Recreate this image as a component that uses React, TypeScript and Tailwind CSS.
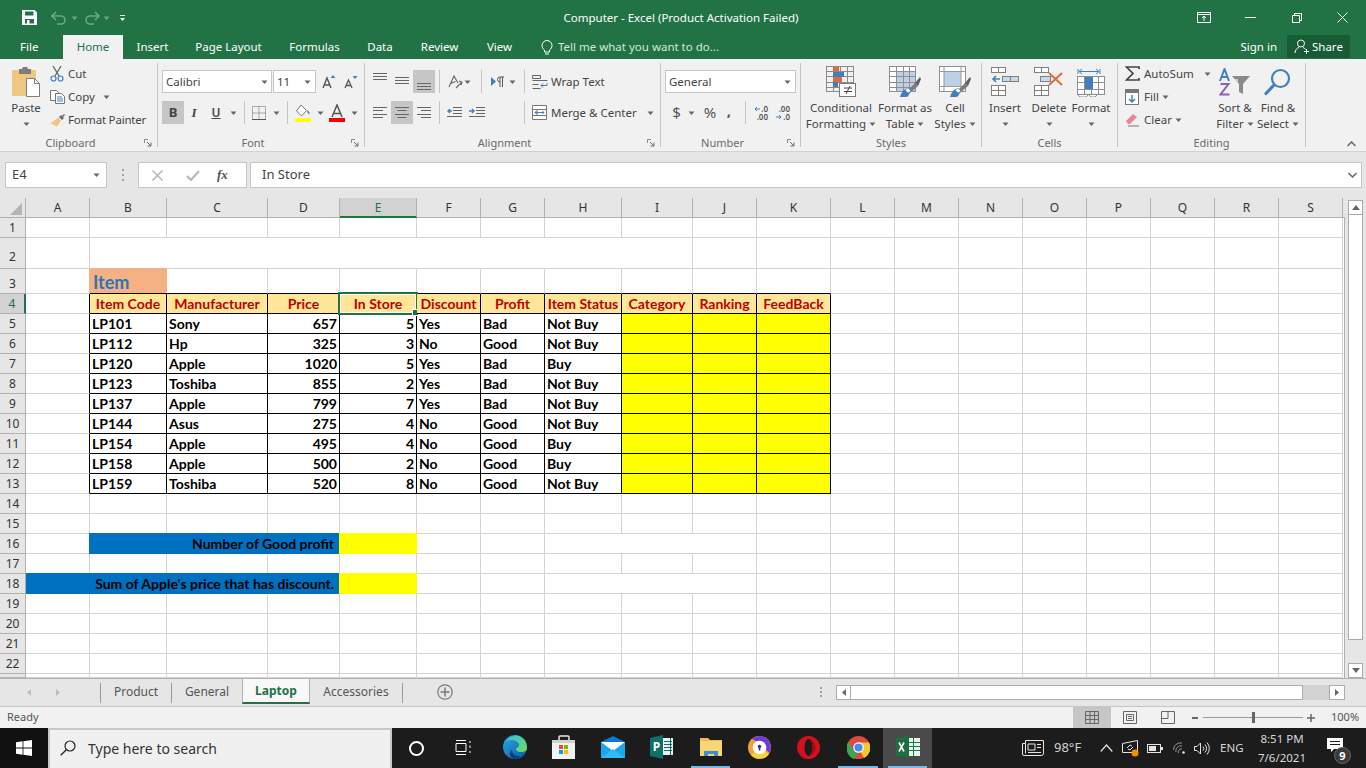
import React from "react";

const UI = "font-['Noto_Sans',sans-serif]";
const GRAY = "#666666";

const Caret = ({ c = "", fill = "#666" }: { c?: string; fill?: string }) => (
  <svg className={`shrink-0 ${c}`} width="7" height="4" viewBox="0 0 7 4"><path d="M.5.500h6L3.500 4z" fill={fill} /></svg>
);
const Sep = ({ c = "" }: { c?: string }) => <div className={`w-px h-[23px] bg-[#c6c6c6] shrink-0 ${c}`} />;

const Lines = ({ ys, ws, right }: { ys: number[]; ws: number[]; right?: boolean }) => (
  <svg width="14" height="23" viewBox="0 0 14 23" className="shrink-0">
    {ys.map((y, i) => (
      <rect key={i} x={right ? 14 - ws[i] : 0} y={y} width={ws[i]} height="1" fill={GRAY} />
    ))}
  </svg>
);
const CenterLines = ({ ys, ws }: { ys: number[]; ws: number[] }) => (
  <svg width="14" height="23" viewBox="0 0 14 23" className="shrink-0">
    {ys.map((y, i) => <rect key={i} x={(14 - ws[i]) / 2} y={y} width={ws[i]} height="1" fill={GRAY} />)}
  </svg>
);

/* ---------- Big ribbon icons ---------- */
const GridLines = ({ x, y, w, h, nx, ny, s = "#8a8a8a" }: { x: number; y: number; w: number; h: number; nx: number; ny: number; s?: string }) => (
  <g stroke={s} strokeWidth="1" fill="none">
    <rect x={x + 0.5} y={y + 0.5} width={w - 1} height={h - 1} />
    {Array.from({ length: nx - 1 }).map((_, i) => <path key={i} d={`M${x + Math.round(((i + 1) * w) / nx) + 0.5} ${y}v${h}`} />)}
    {Array.from({ length: ny - 1 }).map((_, i) => <path key={i} d={`M${x} ${y + Math.round(((i + 1) * h) / ny) + 0.5}h${w}`} />)}
  </g>
);
const Brush = () => (
  <g>
    <path d="M19 25l8-8 3 3-8 7z" fill="#7d7d7d" />
    <path d="M27 17l5-6 1 2-3 7z" fill="#5f5f5f" />
    <path d="M12 31c1-4 3-7 6-8l4 3c-1 3-2 5-4 5z" fill="#3f7fbf" />
    <path d="M17 24l3-2 3 3-3 2z" fill="#fff" stroke="#3f7fbf" strokeWidth=".6" />
  </g>
);
const CondIcon = () => (
  <svg width="32" height="32" viewBox="0 0 32 32" className="shrink-0">
    <GridLines x={1} y={0} w={28} h={26} nx={4} ny={5} />
    <rect x="8" y="1" width="6" height="5" fill="#dd6b3f" />
    <rect x="8" y="6" width="11" height="5" fill="#3f80bf" />
    <rect x="8" y="11" width="9" height="5" fill="#dd6b3f" />
    <rect x="8" y="16" width="5" height="5" fill="#3f80bf" />
    <rect x="14.5" y="17.5" width="16" height="13" fill="#fff" stroke="#7a7a7a" />
    <path d="M19 22h8M19 25.5h8M25 20l-4 8" stroke="#444" fill="none" />
  </svg>
);
const TableIcon = () => (
  <svg width="34" height="32" viewBox="0 0 34 32" className="shrink-0">
    <rect x="1" y="1" width="27" height="25" fill="#fff" />
    <rect x="8" y="6" width="20" height="20" fill="#bdd0e8" />
    <GridLines x={1} y={0} w={27} h={26} nx={4} ny={5} s="#8f8f8f" />
    <Brush />
  </svg>
);
const CellIcon = () => (
  <svg width="34" height="32" viewBox="0 0 34 32" className="shrink-0">
    <rect x="1" y="0" width="27" height="26" fill="#fff" />
    <GridLines x={1} y={0} w={27} h={26} nx={1} ny={1} s="#8f8f8f" />
    <rect x="6" y="6" width="17" height="14" fill="#bdd0e8" />
    <path d="M1 5.5h27M6 1v25M23 1v25M1 20.5h27" stroke="#9a9a9a" />
    <Brush />
  </svg>
);
const InsertIcon = () => (
  <svg width="28" height="30" viewBox="0 0 28 30" className="shrink-0">
    <g fill="#fff" stroke="#7f7f7f">
      <rect x=".5" y=".5" width="7" height="5" /><rect x="7.5" y=".5" width="7" height="5" />
      <rect x=".5" y="18.5" width="7" height="5" /><rect x="7.5" y="18.5" width="7" height="5" />
      <rect x=".5" y="23.5" width="7" height="5" /><rect x="7.5" y="23.5" width="7" height="5" />
    </g>
    <g fill="#c6d9ee" stroke="#7f7f7f"><rect x="11.5" y="9.5" width="8" height="5" /><rect x="19.5" y="9.5" width="8" height="5" /></g>
    <path d="M9 12H2M5 9l-3 3 3 3" stroke="#3f80bf" strokeWidth="1.6" fill="none" />
  </svg>
);
const DeleteIcon = () => (
  <svg width="30" height="30" viewBox="0 0 30 30" className="shrink-0">
    <g fill="#fff" stroke="#7f7f7f">
      <rect x=".5" y=".5" width="7" height="5" /><rect x="7.5" y=".5" width="7" height="5" />
      <rect x=".5" y="18.5" width="7" height="5" /><rect x="7.5" y="18.5" width="7" height="5" />
      <rect x=".5" y="23.5" width="7" height="5" /><rect x="7.5" y="23.5" width="7" height="5" />
    </g>
    <rect x="6.5" y="9.5" width="10" height="5" fill="#c6d9ee" stroke="#7f7f7f" />
    <path d="M15 6l13 12M28 6L15 18" stroke="#dd6b3f" strokeWidth="2" fill="none" />
  </svg>
);
const FormatIcon = () => (
  <svg width="28" height="30" viewBox="0 0 28 30" className="shrink-0">
    <path d="M1 2v5M23 2v5M2 4.500h20M5 2L2 4.500 5 7M19 2l3 2.500L19 7" stroke="#3f80bf" fill="none" />
    <rect x=".5" y="9.500" width="27" height="16" fill="#fff" />
    <GridLines x={0} y={9} w={28} h={19} nx={4} ny={3} s="#8f8f8f" />
    <rect x="8" y="10" width="8" height="12" fill="#3f80bf" />
    <path d="M1 28l2 2h6l2-2M12 28l2 2h4l2-2" fill="#fff" stroke="#8f8f8f" />
  </svg>
);
const SortIcon = () => (
  <svg width="32" height="28" viewBox="0 0 32 28" className="shrink-0">
    <path d="M1 13L5.500 1 10 13M2.500 9h6" stroke="#3f80bf" strokeWidth="2" fill="none" />
    <path d="M1.500 16h8L1.500 26.500h9" stroke="#8e5fb8" strokeWidth="2" fill="none" />
    <path d="M13 8h18l-7 8v10l-4-2v-8z" fill="#8a8a8a" /><path d="M19 15l-3-4h3z" fill="#cfcfcf" />
  </svg>
);
const FindIcon = () => (
  <svg width="28" height="28" viewBox="0 0 28 28" className="shrink-0">
    <circle cx="16.500" cy="10.500" r="8.500" stroke="#3f80bf" strokeWidth="2.200" fill="none" />
    <path d="M10 17L2 25.500" stroke="#3f80bf" strokeWidth="3.200" strokeLinecap="round" />
  </svg>
);

/* ---------- Ribbon scaffolding ---------- */
const Launcher = () => (
  <svg className="absolute right-[5px] top-[4px]" width="8" height="8" viewBox="0 0 8 8">
    <path d="M.5 4V.5H4" stroke="#8a8a8a" fill="none" /><path d="M3 3l4 4M7 3.500V7H3.500" stroke="#6a6a6a" fill="none" />
  </svg>
);
const Group = ({ w, label, launcher, children }: { w: string; label: string; launcher?: boolean; children: React.ReactNode }) => (
  <div className={`${w} h-[84px] shrink-0 flex flex-col border-r border-[#c6c6c6]`}>
    <div className="h-[72px] shrink-0 flex">{children}</div>
    <div className={`h-[16px] shrink-0 relative flex items-center justify-center text-[11px] text-[#6a6a6a] ${launcher ? "pr-[16px]" : ""}`}>
      {label}
      {launcher && <Launcher />}
    </div>
  </div>
);
const Row = ({ c = "", children }: { c?: string; children: React.ReactNode }) => (
  <div className={`flex items-center h-[23px] ${c}`}>{children}</div>
);
const Small = ({ icon, label, caret, iconW = "w-[18px]", c = "" }: { icon: React.ReactNode; label: string; caret?: string; iconW?: string; c?: string }) => (
  <div className={`flex items-center h-[23px] ${c}`}>
    <div className={`${iconW} flex justify-start shrink-0`}>{icon}</div>
    <span className="whitespace-nowrap">{label}</span>
    {caret && <Caret c={caret} />}
  </div>
);
const Big = ({ w, icon, l1, l2, caretLine }: { w: string; icon: React.ReactNode; l1: string; l2?: string; caretLine?: boolean }) => (
  <div className={`${w} shrink-0 flex flex-col items-center`}>
    <div className="h-[37px] flex items-center justify-center shrink-0">{icon}</div>
    <div className="leading-[16px] whitespace-nowrap text-center">{l1}</div>
    <div className="leading-[16px] whitespace-nowrap flex items-center justify-center h-[16px]">
      {l2}
      {caretLine && <Caret c={l2 ? "ml-[3px]" : ""} />}
    </div>
  </div>
);

const Ribbon = () => (
  <div className={`${UI} h-[93px] shrink-0 bg-[#f1f1f1] border-b border-[#d2d2d2] pt-[4px] flex items-start text-[11.500px] text-[#444]`}>
    <Group w="w-[158px]" label="Clipboard" launcher>
      <div className="w-[50px] shrink-0 flex flex-col items-center pl-[2px]">
        <div className="h-[37px] flex items-center">
          <svg width="30" height="30" viewBox="0 0 30 30">
            <rect x="1" y="3" width="24" height="26" fill="#eec882" />
            <path d="M8 2h3l1-2h4l1 2h3v5H8z" fill="#7d7d7d" />
            <path d="M15.500 11.500h8l5 5v13h-13z" fill="#fff" stroke="#7d7d7d" />
            <path d="M23.500 11.500v5h5" fill="none" stroke="#7d7d7d" />
          </svg>
        </div>
        <div className="leading-[16px]">Paste</div>
        <div className="h-[16px] flex items-center"><Caret /></div>
      </div>
      <div className="flex flex-col -mt-px">
        <Small label="Cut" icon={
          <svg width="14" height="16" viewBox="0 0 14 16">
            <path d="M3 0l6 10M11 0L5 10" stroke="#666" strokeWidth="1.300" fill="none" />
            <circle cx="3.500" cy="12.500" r="2.500" stroke="#3f80bf" strokeWidth="1.200" fill="none" />
            <circle cx="10.500" cy="12.500" r="2.500" stroke="#3f80bf" strokeWidth="1.200" fill="none" />
          </svg>} />
        <Small label="Copy" caret="ml-[8px]" icon={
          <svg width="15" height="14" viewBox="0 0 15 14">
            <path d="M.5.500h6l2 2v8H.5z" fill="#fff" stroke="#777" />
            <path d="M5.500 3.500h6l3 3v7h-9z" fill="#fff" stroke="#777" />
            <path d="M7 7h5M7 9h6M7 11h6" stroke="#3f80bf" />
          </svg>} />
        <Small label="Format Painter" c="tracking-[-0.2px]" icon={
          <svg width="16" height="14" viewBox="0 0 16 14">
            <path d="M9 4l2-2 1 1 2-2 1 1-2 2 1 1-2 2z" fill="#6a6a6a" />
            <path d="M8 4.500l3 3-4 6-7-3.500 2-.500z" fill="#eec882" />
          </svg>} />
      </div>
    </Group>

    <Group w="w-[207px]" label="Font" launcher>
      <div className="pt-[7px] pl-[4px] flex flex-col gap-[8px]">
        <Row>
          <div className="w-[110px] h-[23px] bg-white border border-[#c6c6c6] flex items-center justify-between pl-[3px] pr-[3px]">
            <span>Calibri</span><Caret />
          </div>
          <div className="w-[43px] ml-px h-[23px] bg-white border border-[#c6c6c6] flex items-center justify-between pl-[3px] pr-[4px]">
            <span>11</span><Caret />
          </div>
          <svg className="ml-[6px]" width="14" height="14" viewBox="0 0 14 14">
            <path d="M1 13L5 3l4 10M2.500 10h5" stroke="#555" strokeWidth="1.400" fill="none" /><path d="M8.500 3L11 0l2.500 3z" fill="#3f80bf" />
          </svg>
          <svg className="ml-[8px]" width="14" height="14" viewBox="0 0 14 14">
            <path d="M1 13l3.500-8L8 13M2 10.500h5" stroke="#555" strokeWidth="1.300" fill="none" /><path d="M8.500 1L11 4l2.500-3z" fill="#3f80bf" />
          </svg>
        </Row>
        <Row>
          <div className="w-[22px] h-[23px] bg-[#c6c6c6] flex items-center justify-center font-bold text-[13px] text-[#444]">B</div>
          <div className="w-[20px] flex justify-center italic font-semibold text-[13px] font-['Liberation_Serif',serif]">I</div>
          <div className="w-[24px] flex justify-center font-semibold text-[12px] underline">U</div>
          <Caret c="ml-[2px]" />
          <Sep c="ml-[7px]" />
          <svg className="ml-[7px]" width="14" height="14" viewBox="0 0 14 14">
            <path d="M.5.500h13v13H.5zM7 .5v13M.5 7h13" stroke="#666" strokeDasharray="1 1" fill="none" /><path d="M0 13.500h14" stroke="#555" />
          </svg>
          <Caret c="ml-[7px]" />
          <Sep c="ml-[7px]" />
          <svg className="ml-[7px]" width="16" height="18" viewBox="0 0 16 18">
            <path d="M6 1l5.500 5.500L6.500 12 1.500 7z" fill="#fff" stroke="#777" /><path d="M12 6c2 1 3 3 2.500 4.500C13 10 12 8 12 6z" fill="#3f80bf" />
            <rect y="14" width="16" height="4" fill="#ffff00" />
          </svg>
          <Caret c="ml-[6px]" />
          <svg className="ml-[5px]" width="16" height="18" viewBox="0 0 16 18">
            <path d="M3 13L8 1l5 12M4.500 9.500h7" stroke="#555" strokeWidth="1.500" fill="none" /><rect y="14" width="16" height="4" fill="#ff0000" />
          </svg>
          <Caret c="ml-[6px]" />
        </Row>
      </div>
    </Group>

    <Group w="w-[296px]" label="Alignment" launcher>
      <div className="pt-[7px] pl-[8px] flex flex-col gap-[8px]">
        <Row>
          <Lines ys={[3, 6, 9]} ws={[14, 14, 14]} />
          <div className="ml-[8px]"><Lines ys={[7, 10, 13]} ws={[14, 14, 14]} /></div>
          <div className="ml-[4px] w-[22px] h-[23px] bg-[#c6c6c6] flex justify-center"><Lines ys={[13, 16, 19]} ws={[14, 14, 14]} /></div>
          <Sep c="ml-[4px]" />
          <svg className="ml-[7px]" width="16" height="16" viewBox="0 0 16 16">
            <path d="M2 13L7 2l4 7M3.500 9.500l5-2M9 14l6-6M12 7l3 1-1 3" stroke="#666" strokeWidth="1.100" fill="none" />
          </svg>
          <Caret c="ml-[1px]" />
          <Sep c="ml-[10px]" />
          <svg className="ml-[9px]" width="14" height="12" viewBox="0 0 14 12">
            <path d="M0 1l5 4.500L0 10z" fill="#3f80bf" /><path d="M9 11V1h4M11.500 1v10M9 1a2.500 2.500 0 0 0 0 5" stroke="#555" fill="none" />
          </svg>
          <Caret c="ml-[4px]" />
          <Sep c="ml-[8px]" />
          <svg className="ml-[7px]" width="16" height="16" viewBox="0 0 16 16">
            <path d="M.5 1.500h8v3h-8zM.5 6.500h15M.5 10.500h6M.5 14.500h8" stroke="#666" fill="none" /><path d="M15 9v2.500H9M11 9.500l-2 2 2 2" stroke="#3f80bf" fill="none" />
          </svg>
          <span className="ml-[3px] whitespace-nowrap">Wrap Text</span>
        </Row>
        <Row>
          <Lines ys={[6, 9, 13, 16]} ws={[14, 10, 14, 10]} />
          <div className="ml-[4px] w-[22px] h-[23px] bg-[#c6c6c6] flex justify-center"><CenterLines ys={[6, 9, 13, 16]} ws={[14, 9, 14, 9]} /></div>
          <div className="ml-[4px]"><Lines right ys={[6, 9, 13, 16]} ws={[14, 10, 14, 10]} /></div>
          <Sep c="ml-[8px]" />
          <svg className="ml-[7px]" width="15" height="12" viewBox="0 0 15 12">
            <path d="M6 .5h9M6 3.500h9M6 6.500h9M0 9.500h15" stroke="#666" fill="none" /><path d="M5 4H1M3 2L1 4l2 2" stroke="#3f80bf" strokeWidth="1.400" fill="none" />
          </svg>
          <svg className="ml-[7px]" width="16" height="12" viewBox="0 0 16 12">
            <path d="M7 .5h9M7 3.500h9M7 6.500h9M0 9.500h16" stroke="#666" fill="none" /><path d="M0 4h4M3 2l2 2-2 2" stroke="#3f80bf" strokeWidth="1.400" fill="none" />
          </svg>
          <Sep c="ml-[39px]" />
          <svg className="ml-[7px]" width="15" height="15" viewBox="0 0 15 15">
            <path d="M.5.500h14v14H.5zM.5 4.500h14M.5 10.500h14M5 4.500v6" stroke="#777" fill="#fff" /><path d="M3 7.500h9M4.500 6l-1.500 1.500L4.500 9M10.500 6L12 7.500 10.500 9" stroke="#3f80bf" fill="none" />
          </svg>
          <span className="ml-[4px] whitespace-nowrap">Merge &amp; Center</span>
          <Caret c="ml-[10px]" />
        </Row>
      </div>
    </Group>

    <Group w="w-[140px]" label="Number" launcher>
      <div className="pt-[7px] pl-[4px] flex flex-col gap-[8px]">
        <Row>
          <div className="w-[131px] h-[23px] bg-white border border-[#c6c6c6] flex items-center justify-between pl-[3px] pr-[4px]">
            <span>General</span><Caret />
          </div>
        </Row>
        <Row>
          <span className="ml-[7px] w-[9px] text-[15px] text-[#555] flex justify-center">$</span>
          <Caret c="ml-[7px]" />
          <span className="ml-[8px] w-[14px] text-[15px] text-[#555] flex justify-center">%</span>
          <span className="ml-[9px] w-[6px] text-[15px] font-bold text-[#555] flex justify-center -mt-[4px]">,</span>
          <Sep c="ml-[13px]" />
          <div className="ml-[7px] w-[15px] text-[8px] leading-[8px] font-semibold text-[#555] text-right">
            <div className="flex items-center justify-end"><svg width="6" height="6" viewBox="0 0 6 6" className="mr-[1px]"><path d="M6 3H1M3 1L1 3l2 2" stroke="#3f80bf" fill="none" /></svg>.0</div>
            <div>.00</div>
          </div>
          <div className="ml-[7px] w-[15px] text-[8px] leading-[8px] font-semibold text-[#555] text-right">
            <div>.00</div>
            <div className="flex items-center justify-end"><svg width="6" height="6" viewBox="0 0 6 6" className="mr-[1px]"><path d="M0 3h5M3 1l2 2-2 2" stroke="#3f80bf" fill="none" /></svg>.0</div>
          </div>
        </Row>
      </div>
    </Group>

    <Group w="w-[181px]" label="Styles">
      <Big w="w-[80px]" icon={<CondIcon />} l1="Conditional" l2="Formatting" caretLine />
      <Big w="w-[48px]" icon={<TableIcon />} l1="Format as" l2="Table" caretLine />
      <Big w="w-[52px]" icon={<CellIcon />} l1="Cell" l2="Styles" caretLine />
    </Group>

    <Group w="w-[136px]" label="Cells">
      <Big w="w-[46px]" icon={<InsertIcon />} l1="Insert" caretLine />
      <Big w="w-[42px]" icon={<DeleteIcon />} l1="Delete" caretLine />
      <Big w="w-[42px]" icon={<FormatIcon />} l1="Format" caretLine />
    </Group>

    <Group w="w-[188px]" label="Editing">
      <div className="w-[95px] shrink-0 flex flex-col pl-[7px] -mt-px">
        <Small iconW="w-[19px]" label="AutoSum" caret="ml-[10px]" icon={
          <svg width="15" height="15" viewBox="0 0 15 15"><path d="M14 3V1H1.500L8 7.500 1.500 14H14v-2" stroke="#444" strokeWidth="1.700" fill="none" /></svg>} />
        <Small iconW="w-[19px]" label="Fill" caret="ml-[3px]" icon={
          <svg width="14" height="16" viewBox="0 0 14 16"><rect x=".5" y=".5" width="13" height="15" fill="#fff" stroke="#777" /><rect width="14" height="4" fill="#777" /><path d="M7 6v7M4 10l3 3 3-3" stroke="#3f80bf" strokeWidth="1.500" fill="none" /></svg>} />
        <Small iconW="w-[19px]" label="Clear" caret="ml-[3px]" icon={
          <svg width="15" height="14" viewBox="0 0 15 14"><path d="M1 8l7-7 4 3-7 7H3z" fill="#e98796" /><path d="M3 13h11" stroke="#777" /></svg>} />
      </div>
      <Big w="w-[44px]" icon={<SortIcon />} l1="Sort &" l2="Filter" caretLine />
      <Big w="w-[42px]" icon={<FindIcon />} l1="Find &" l2="Select" caretLine />
    </Group>

    <svg className="ml-auto self-end mb-[4px] mr-[10px]" width="9" height="6" viewBox="0 0 9 6"><path d="M.5 5l4-4 4 4" stroke="#666" strokeWidth="1.500" fill="none" /></svg>
  </div>
);

/* ---------- Title + tabs ---------- */
const TitleBar = () => (
  <div className={`${UI} h-[35px] shrink-0 bg-[#217346] flex items-center text-white`}>
    <svg className="ml-[22px]" width="15" height="15" viewBox="0 0 15 15">
      <path d="M0 0h12.500L15 2.500V15H0z" fill="#fff" />
      <rect x="3" y="1.500" width="8.500" height="4" fill="#217346" />
      <rect x="3" y="9" width="9" height="4.500" fill="#217346" /><rect x="5" y="10" width="2.500" height="5" fill="#fff" />
    </svg>
    <svg className="ml-[14px]" width="16" height="14" viewBox="0 0 16 14"><path d="M5 1L1 5l4 4M1 5h9a4 4 0 0 1 0 8H6" stroke="#6ba688" strokeWidth="1.600" fill="none" /></svg>
    <Caret c="ml-[4px]" fill="#6ba688" />
    <svg className="ml-[6px]" width="16" height="14" viewBox="0 0 16 14"><path d="M11 1l4 4-4 4M15 5H6a4 4 0 0 0 0 8h4" stroke="#6ba688" strokeWidth="1.600" fill="none" /></svg>
    <Caret c="ml-[3px]" fill="#6ba688" />
    <svg className="ml-[9px] mt-[2px]" width="7" height="7" viewBox="0 0 7 7"><path d="M1 .5h5" stroke="#fff" /><path d="M1 3h5L3.500 6z" fill="#fff" /></svg>
    <div className="flex-1 text-center text-[11.500px] ml-[39px]">Computer - Excel (Product Activation Failed)</div>
    <svg width="14" height="11" viewBox="0 0 14 11" className="mr-[34px]"><path d="M.5.500h13v10H.5zM1 2.500h12" stroke="#fff" fill="none" /><path d="M7 9V4.500M5 6l2-2 2 2" stroke="#fff" fill="none" /></svg>
    <div className="w-[11px] h-px bg-white mr-[36px]" />
    <svg width="10" height="10" viewBox="0 0 10 10" className="mr-[35px]"><path d="M.5 2.500h7v7h-7zM2.500 2.500v-2h7v7h-2" stroke="#fff" fill="none" /></svg>
    <svg width="11" height="11" viewBox="0 0 11 11" className="mr-[18px]"><path d="M.5.500l10 10M10.500.500l-10 10" stroke="#fff" fill="none" /></svg>
  </div>
);

const tabs: [string, string][] = [
  ["Insert", "w-[59px]"], ["Page Layout", "w-[93px]"], ["Formulas", "w-[79px]"], ["Data", "w-[52px]"], ["Review", "w-[67px]"], ["View", "w-[53px]"],
];
const TabsBar = () => (
  <div className={`${UI} h-[24px] shrink-0 bg-[#217346] flex items-stretch text-[11.500px] text-white`}>
    <div className="w-[63px] pl-[20px] leading-[24px]">File</div>
    <div className="w-[60px] bg-[#f1f1f1] text-[#217346] text-center leading-[24px]">Home</div>
    {tabs.map(([t, w]) => <div key={t} className={`${w} text-center leading-[24px]`}>{t}</div>)}
    <svg className="ml-[15px] self-center" width="12" height="15" viewBox="0 0 12 15"><path d="M3.500 10C2 9 1 7.500 1 5.500a5 5 0 0 1 10 0c0 2-1 3.500-2.500 4.500v2h-5zM4 14h4" stroke="#fff" fill="none" /></svg>
    <div className="ml-[5px] leading-[24px] text-[#d6e6dd] whitespace-nowrap">Tell me what you want to do...</div>
    <div className="ml-auto leading-[24px]">Sign in</div>
    <div className="ml-[10px] mr-[16px] w-[63px] h-[23px] bg-[#185c37] flex items-center pl-[7px]">
      <svg width="16" height="15" viewBox="0 0 16 15"><circle cx="7" cy="4.500" r="3.500" stroke="#fff" fill="none" /><path d="M1 14c0-3 2-5 4-5.500M9 8.500c1 .3 2 1 2.500 2M12.500 10v5M10 12.500h5" stroke="#fff" fill="none" /></svg>
      <span className="ml-[2px]">Share</span>
    </div>
  </div>
);

const FormulaBar = () => (
  <div className={`${UI} h-[46px] shrink-0 bg-[#e6e6e6] flex pt-[10px] pl-[5px] text-[#444] text-[13px]`}>
    <div className="w-[102px] h-[26px] bg-white border border-[#c6c6c6] flex items-center justify-between pl-[6px] pr-[6px]">
      <span>E4</span><Caret />
    </div>
    <div className="w-[31px] h-[26px] flex items-center justify-center">
      <div className="flex flex-col gap-[3px]">
        <div className="w-[2px] h-[2px] bg-[#a0a0a0]" /><div className="w-[2px] h-[2px] bg-[#a0a0a0]" /><div className="w-[2px] h-[2px] bg-[#a0a0a0]" />
      </div>
    </div>
    <div className="w-[109px] h-[26px] bg-white border border-[#c6c6c6] flex items-center pl-[13px]">
      <svg width="11" height="11" viewBox="0 0 11 11"><path d="M.5.500l10 10M10.500.500l-10 10" stroke="#b5b5b5" strokeWidth="1.500" fill="none" /></svg>
      <svg className="ml-[23px]" width="14" height="11" viewBox="0 0 14 11"><path d="M1 6l4 4 8-9" stroke="#b5b5b5" strokeWidth="2" fill="none" /></svg>
      <span className="ml-[17px] italic font-bold text-[13px] font-['Liberation_Serif',serif] text-[#555]">fx</span>
    </div>
    <div className="ml-[3px] w-[1112px] h-[26px] bg-white border border-[#c6c6c6] flex items-center pl-[11px] pr-[4px] justify-between">
      <span>In Store</span>
      <svg width="9" height="6" viewBox="0 0 9 6"><path d="M.5 1l4 4 4-4" stroke="#666" strokeWidth="1.500" fill="none" /></svg>
    </div>
  </div>
);

/* ---------- Sheet ---------- */
const cols = ["A", "B", "C", "D", "E", "F", "G", "H", "I", "J", "K", "L", "M", "N", "O", "P", "Q", "R", "S"];
const G = "border-r border-b border-[#d4d4d4] bg-white";
const K = "border-r border-b border-black";
const FONT = "font-['Lato',sans-serif] font-bold text-[14px] whitespace-nowrap";
const CELL = `${FONT} text-black overflow-hidden`;
const heads = ["Item Code", "Manufacturer", "Price", "In Store", "Discount", "Profit", "Item Status", "Category", "Ranking", "FeedBack"];
const data: (string | number)[][] = [
  ["LP101", "Sony", 657, 5, "Yes", "Bad", "Not Buy"],
  ["LP112", "Hp", 325, 3, "No", "Good", "Not Buy"],
  ["LP120", "Apple", 1020, 5, "Yes", "Bad", "Buy"],
  ["LP123", "Toshiba", 855, 2, "Yes", "Bad", "Not Buy"],
  ["LP137", "Apple", 799, 7, "Yes", "Bad", "Not Buy"],
  ["LP144", "Asus", 275, 4, "No", "Good", "Not Buy"],
  ["LP154", "Apple", 495, 4, "No", "Good", "Buy"],
  ["LP158", "Apple", 500, 2, "No", "Good", "Buy"],
  ["LP159", "Toshiba", 520, 8, "No", "Good", "Not Buy"],
];

const RowHead = ({ n }: { n: number }) => (
  <div className={`${UI} border-r border-b border-[#b1b1b1] ${n === 4 ? "bg-[#d2d2d2] text-[#217346] border-r-2 border-r-[#217346]" : "bg-[#e6e6e6] text-[#333]"} ${n === 2 ? "pb-[2px]" : ""} text-[12px] flex items-end justify-center leading-[18px]`}>
    {n === 23 ? "" : n}
  </div>
);
const Tail = () => <div className="bg-white border-r border-[#b1b1b1]" />;
const blanks = (idx: number[], r: string) => idx.map((i) => <div key={`${r}-${i}`} className={G} />);
const range = (a: number, b: number) => Array.from({ length: b - a + 1 }, (_, i) => a + i);

const SheetRow = ({ n }: { n: number }) => {
  let body: React.ReactNode;
  if (n === 2) {
    body = <>{blanks([0], "a")}<div className={`${G} col-span-8`} />{blanks(range(9, 18), "b")}</>;
  } else if (n === 3) {
    body = (
      <>
        <div className="border-r border-b border-r-[#f4b183] border-b-[#d4d4d4] bg-white" />
        <div className="relative -mt-px bg-[#f4b183] border-b border-black pl-[3px] font-['Lato',sans-serif] font-bold text-[18px] leading-[28px] text-[#2e75b6]">Item</div>
        {range(2, 10).map((i) => <div key={i} className="border-r border-b border-r-[#d4d4d4] border-b-black bg-white" />)}
        {blanks(range(11, 18), "c")}
      </>
    );
  } else if (n === 4) {
    body = (
      <>
        <div className="border-r border-b border-r-black border-b-[#d4d4d4] bg-white" />
        {heads.map((h) => (
          <div key={h} className={`${K} relative bg-[#ffe699] ${FONT} text-center text-[#c00000] leading-[20px]`}>
            {h}
            {h === "In Store" && (
              <div className="absolute -left-[2px] -top-[2px] w-[80px] h-[23px] border-2 border-[#217346] shadow-[inset_0_0_0_1px_#ffffff]">
                <div className="absolute -right-[3px] -bottom-[3px] w-[7px] h-[7px] bg-[#217346] border border-white" />
              </div>
            )}
          </div>
        ))}
        {blanks(range(11, 18), "d")}
      </>
    );
  } else if (n >= 5 && n <= 13) {
    const d = data[n - 5];
    body = (
      <>
        <div className="border-r border-b border-r-black border-b-[#d4d4d4] bg-white" />
        {d.map((v, i) => (
          <div key={i} className={`${K} ${CELL} bg-white leading-[20px] ${typeof v === "number" ? "text-right pr-[2px]" : "pl-[2px]"}`}>{v}</div>
        ))}
        <div className={`${K} bg-[#ffff00]`} /><div className={`${K} bg-[#ffff00]`} /><div className={`${K} bg-[#ffff00]`} />
        {blanks(range(11, 18), "e")}
      </>
    );
  } else if (n === 16) {
    body = (
      <>
        {blanks([0], "f")}
        <div className={`relative -mt-px -ml-px col-span-3 bg-[#0070c0] text-right pr-[6px] ${CELL} leading-[22px]`}>Number of Good profit</div>
        <div className="relative -mt-px -ml-px bg-[#ffff00]" />
        {blanks([5, 6], "g")}<div className={`${G} col-span-3`} />{blanks(range(10, 18), "h")}
      </>
    );
  } else if (n === 18) {
    body = (
      <>
        <div className={`relative -mt-px col-span-4 bg-[#0070c0] text-right pr-[6px] ${CELL} leading-[22px]`}>Sum of Apple's price that has discount.</div>
        <div className="relative -mt-px -ml-px bg-[#ffff00]" />
        {blanks([5, 6], "i")}<div className={`${G} col-span-3`} />{blanks(range(10, 18), "j")}
      </>
    );
  } else {
    body = blanks(range(0, 18), "k");
  }
  return <><RowHead n={n} />{body}<Tail /></>;
};

const Scrollbar = () => (
  <div className="w-[21px] shrink-0 bg-[#e6e6e6] pl-[3px] pt-[2px] flex flex-col">
    <div className="w-[15px] h-[15px] bg-white border border-[#ababab] flex items-center justify-center">
      <svg width="8" height="5" viewBox="0 0 8 5"><path d="M0 5l4-5 4 5z" fill="#666" /></svg>
    </div>
    <div className="w-[15px] h-[425px] bg-white border-x border-b border-[#ababab]" />
    <div className="w-[15px] h-[23px] bg-[#e6e6e6]" />
    <div className="w-[15px] h-[15px] bg-white border border-[#ababab] flex items-center justify-center">
      <svg width="8" height="5" viewBox="0 0 8 5"><path d="M0 0l4 5 4-5z" fill="#666" /></svg>
    </div>
  </div>
);

const Sheet = () => (
  <div className="h-[480px] shrink-0 flex overflow-hidden bg-[#e6e6e6]">
    <div className="w-[1345px] shrink-0 h-[480px] overflow-hidden grid grid-cols-[26px_64px_77px_101px_72px_77px_64px_64px_77px_71px_64px_74px_64px_64px_64px_64px_64px_64px_64px_64px_2px] grid-rows-[20px_20px_31px_25px_repeat(18,20px)_20px]">
      <div className="bg-[#e6e6e6] border-r border-b border-[#b1b1b1] pl-[10px] pt-[5px]">
        <svg width="12" height="12" viewBox="0 0 12 12" className="block"><path d="M12 0v12H0z" fill="#b4b4b4" /></svg>
      </div>
      {cols.map((c) => (
        <div key={c} className={`${UI} text-[12px] leading-[19px] text-center border-r border-[#b1b1b1] ${c === "E" ? "bg-[#d2d2d2] text-[#217346] border-b-2 border-b-[#217346]" : "bg-[#e6e6e6] text-[#333] border-b border-b-[#b1b1b1]"}`}>{c}</div>
      ))}
      <div className="bg-[#e6e6e6] border-b border-[#b1b1b1]" />
      {range(1, 23).map((n) => <SheetRow key={n} n={n} />)}
    </div>
    <Scrollbar />
  </div>
);

/* ---------- Sheet tabs & status ---------- */
const TabSep = () => <div className="w-px h-[20px] mt-[4px] bg-[#9a9a9a] shrink-0" />;
const SheetTabs = () => (
  <div className={`${UI} h-[28px] shrink-0 bg-[#e6e6e6] border-t border-[#b1b1b1] flex items-start text-[12px] text-[#555]`}>
    <svg className="ml-[27px] mt-[10px]" width="4" height="7" viewBox="0 0 4 7"><path d="M4 0v7L0 3.500z" fill="#bdbdbd" /></svg>
    <svg className="ml-[25px] mt-[10px]" width="4" height="7" viewBox="0 0 4 7"><path d="M0 0v7l4-3.500z" fill="#bdbdbd" /></svg>
    <div className="ml-[40px]"><TabSep /></div>
    <div className="w-[70px] text-center leading-[25px] shrink-0">Product</div>
    <TabSep />
    <div className="w-[70px] text-center leading-[25px] shrink-0">General</div>
    <div className="w-[68px] h-[25px] shrink-0 bg-[#f8f8f8] border-x border-[#b1b1b1] border-b-2 border-b-[#217346] text-center text-[#217346] font-bold leading-[24px]">Laptop</div>
    <div className="w-[92px] text-center leading-[25px] shrink-0">Accessories</div>
    <TabSep />
    <svg className="ml-[34px] mt-[5px]" width="16" height="16" viewBox="0 0 16 16"><circle cx="8" cy="8" r="7.200" stroke="#7a7a7a" strokeWidth="1.200" fill="none" /><path d="M8 3.500v9M3.500 8h9" stroke="#7a7a7a" strokeWidth="1.500" /></svg>
    <div className="ml-[367px] mt-[8px] flex flex-col gap-[2px]">
      <div className="w-[2px] h-[2px] bg-[#a0a0a0]" /><div className="w-[2px] h-[2px] bg-[#a0a0a0]" /><div className="w-[2px] h-[2px] bg-[#a0a0a0]" />
    </div>
    <div className="ml-[14px] mt-[6px] h-[15px] flex">
      <div className="w-[15px] bg-white border border-[#ababab] flex items-center justify-center">
        <svg width="4" height="7" viewBox="0 0 4 7"><path d="M4 0v7L0 3.500z" fill="#666" /></svg>
      </div>
      <div className="w-[452px] bg-white border-y border-r border-[#ababab]" />
      <div className="w-[26px] bg-[#d2d2d2]" />
      <div className="w-[16px] bg-white border border-[#ababab] flex items-center justify-center">
        <svg width="4" height="7" viewBox="0 0 4 7"><path d="M0 0v7l4-3.500z" fill="#666" /></svg>
      </div>
    </div>
  </div>
);

const StatusBar = () => (
  <div className={`${UI} h-[22px] shrink-0 bg-[#f1f1f1] border-t border-[#c6c6c6] flex items-center text-[11px] text-[#555]`}>
    <span className="ml-[7px]">Ready</span>
    <div className="ml-auto w-[38px] h-[21px] bg-[#c6c6c6] flex items-center justify-center">
      <svg width="14" height="13" viewBox="0 0 14 13"><path d="M.5.500h13v12H.5zM5 .5v12M9.500.5v12M.5 4.500h13M.5 8.500h13" stroke="#666" fill="none" /></svg>
    </div>
    <div className="w-[38px] flex justify-center">
      <svg width="14" height="13" viewBox="0 0 14 13"><path d="M.5.500h13v12H.5zM3.500 3.500h7v6h-7zM5 5.500h4M5 7.500h4" stroke="#666" fill="none" /></svg>
    </div>
    <div className="w-[38px] flex justify-center">
      <svg width="14" height="13" viewBox="0 0 14 13"><path d="M.5.500h13v12H.5zM7 .5v7H.5" stroke="#666" fill="none" /></svg>
    </div>
    <div className="w-[6px] h-[2px] bg-[#666] ml-[5px]" />
    <div className="w-[100px] h-px bg-[#999] ml-[5px] flex items-center justify-center">
      <div className="w-[3px] h-[11px] bg-[#666]" />
    </div>
    <svg className="ml-[4px]" width="8" height="8" viewBox="0 0 8 8"><path d="M4 0v8M0 4h8" stroke="#666" strokeWidth="1.500" /></svg>
    <span className="ml-[16px] mr-[9px] w-[26px] text-right">100%</span>
  </div>
);

/* ---------- Taskbar ---------- */
const TBItem = ({ w, c = "", line, children }: { w: string; c?: string; line?: boolean; children: React.ReactNode }) => (
  <div className={`${w} h-full shrink-0 flex flex-col ${c}`}>
    <div className="flex-1 flex items-center justify-center">{children}</div>
    <div className={`h-[2px] mx-[5px] ${line ? "bg-[#76b9ed]" : ""}`} />
  </div>
);

const Taskbar = () => (
  <div className={`${UI} h-[40px] shrink-0 bg-[#1c1c1c] flex items-center text-[#e5e5e5]`}>
    <div className="w-[48px] h-full bg-[#111] flex items-center justify-center">
      <svg width="16" height="16" viewBox="0 0 16 16"><path d="M0 2.200L6.600 1.300V7.600H0zM7.400 1.200L16 0V7.600H7.400zM0 8.400H6.600V14.700L0 13.800zM7.400 8.400H16V16L7.400 14.800z" fill="#fff" /></svg>
    </div>
    <div className="w-[344px] h-full bg-[#f0f0f0] border-[2px] border-[#c8c8c8] border-b-0 flex items-center pl-[10px] pb-[2px] text-[14px] text-[#333]">
      <svg width="16" height="16" viewBox="0 0 16 16"><circle cx="10" cy="6" r="5" stroke="#222" strokeWidth="1.200" fill="none" /><path d="M6.300 9.700L.7 15.300" stroke="#222" strokeWidth="1.300" /></svg>
      <span className="ml-[12px]">Type here to search</span>
    </div>
    <div className="w-[48px] h-full flex items-center justify-center">
      <div className="w-[15px] h-[15px] rounded-full border-[2.500px] border-white" />
    </div>
    <TBItem w="w-[50px]">
      <svg className="-ml-[3px]" width="17" height="15" viewBox="0 0 17 15"><path d="M1 .5h10M1 14.500h10M1 3.500h10v8H1zM15 1v2M15 5.500v2.500M15 11v2" stroke="#fff" fill="none" /></svg>
    </TBItem>
    <TBItem w="w-[49px]">
      <svg width="24" height="24" viewBox="0 0 24 24">
        <defs>
          <linearGradient id="e1" x1="0" y1="0" x2="1" y2="1"><stop offset="0" stopColor="#2ca7e0" /><stop offset="1" stopColor="#0c59a4" /></linearGradient>
          <linearGradient id="e2" x1="0" y1="0" x2="1" y2="1"><stop offset="0" stopColor="#34c1d8" /><stop offset="1" stopColor="#6fdc5d" /></linearGradient>
        </defs>
        <circle cx="12" cy="12" r="12" fill="url(#e1)" />
        <path d="M3 7C6 1 13-1 18 2c4 2 6 7 6 11 0 3-3 4-6 4-4 0-5-2-5-3 0-2 3-1 3-4 0-4-8-7-13-3z" fill="url(#e2)" />
        <path d="M9 15c0 4 4 7 9 6-2 2-4 3-7 3-4-1-6-6-2-9z" fill="#0b3f7f" />
      </svg>
    </TBItem>
    <TBItem w="w-[49px]">
      <svg width="24" height="24" viewBox="0 0 24 24">
        <path d="M7 6V2a1 1 0 0 1 1-1h8a1 1 0 0 1 1 1v4" stroke="#e8e8e8" strokeWidth="1.500" fill="none" />
        <rect y="5" width="23" height="19" fill="#f2f2f2" /><rect y="5" width="23" height="3" fill="#d0d0d0" />
        <rect x="7" y="10" width="4" height="4" fill="#f25022" /><rect x="12" y="10" width="4" height="4" fill="#7fba00" />
        <rect x="7" y="15" width="4" height="4" fill="#00a4ef" /><rect x="12" y="15" width="4" height="4" fill="#ffb900" />
      </svg>
    </TBItem>
    <TBItem w="w-[49px]">
      <svg width="24" height="22" viewBox="0 0 24 22">
        <path d="M0 6L12 0l12 6v16H0z" fill="#0a78d7" /><path d="M0 6h24v16H0z" fill="#1ca6ee" />
        <path d="M0 6l12 9 12-9" fill="#fff" /><path d="M0 22L12 13l12 9z" fill="#2ebcf4" />
      </svg>
    </TBItem>
    <TBItem w="w-[49px]">
      <svg width="24" height="24" viewBox="0 0 24 24">
        <rect x="13" y="3" width="10" height="17" fill="#e8f2f0" /><path d="M14 6.500h8M14 9.500h8M14 12.500h8M14 15.500h8M20.500 3v17" stroke="#0f6a63" />
        <path d="M0 3l13-3v24L0 21z" fill="#0f7068" />
        <text x="6.500" y="16" textAnchor="middle" fontSize="12" fontWeight="700" fontFamily="Noto Sans, sans-serif" fill="#fff">P</text>
      </svg>
    </TBItem>
    <TBItem w="w-[49px]" line>
      <svg width="22" height="18" viewBox="0 0 22 18">
        <path d="M0 0h8l2 2h12v16H0z" fill="#f0c04c" /><path d="M0 3h22v15H0z" fill="#f7d774" />
        <path d="M4 18v-5h14v5h-4v-2H8v2z" fill="#3d8ed1" />
      </svg>
    </TBItem>
    <TBItem w="w-[49px]">
      <svg width="23" height="23" viewBox="0 0 23 23">
        <circle cx="11.500" cy="11.500" r="11.500" fill="#f2a03d" />
        <path d="M11.500 0a11.500 11.500 0 0 1 10 17L16 12c0-4-2-7-8-7L4 3a11 11 0 0 1 7.500-3z" fill="#6b3dd6" />
        <path d="M3 19l4-3c3 2 7 2 10-1l4 3c-4 6-13 6-18 1z" fill="#f5d33a" />
        <circle cx="11.500" cy="11.500" r="6.800" fill="#fff" /><circle cx="11.500" cy="10.500" r="1.700" fill="#3a2a72" /><rect x="10.700" y="11" width="1.600" height="3.500" fill="#3a2a72" />
      </svg>
    </TBItem>
    <TBItem w="w-[49px]">
      <svg width="23" height="23" viewBox="0 0 23 23">
        <circle cx="11.500" cy="11.500" r="11.500" fill="#d4101f" /><ellipse cx="11.500" cy="11.500" rx="4" ry="8.500" fill="#1c1c1c" />
        <path d="M11.500 3c3 0 4 4 4 8.500s-1 8.500-4 8.500c3 0 7-3 7-8.500S14.500 3 11.500 3z" fill="#a50b16" />
      </svg>
    </TBItem>
    <TBItem w="w-[50px]" line>
      <svg width="23" height="23" viewBox="0 0 23 23">
        <circle cx="11.500" cy="11.500" r="11.500" fill="#dd4b3e" />
        <path d="M11.500 6.500H22a11.500 11.500 0 0 1-5 15.500l-5.500-10z" fill="#f7c92e" />
        <path d="M1.500 5.800L7 15.500l4 1.500L7 23A11.500 11.500 0 0 1 1.500 5.800z" fill="#3aa757" />
        <circle cx="11.500" cy="11.500" r="5.300" fill="#fff" /><circle cx="11.500" cy="11.500" r="4.100" fill="#4a8af4" />
      </svg>
    </TBItem>
    <TBItem w="w-[49px]" c="bg-[#4a4a4a]" line>
      <svg width="24" height="22" viewBox="0 0 24 22">
        <rect x="11" y="2" width="13" height="18" fill="#e7f3ec" /><path d="M11 6.500h13M11 10.500h13M11 14.500h13M17.500 2v18" stroke="#1b7a49" />
        <path d="M0 2l13-2v22L0 20z" fill="#1d6f42" /><path d="M3 6.500l5 9M8 6.500l-5 9" stroke="#fff" strokeWidth="1.600" />
      </svg>
    </TBItem>
    <svg className="ml-[90px]" width="24" height="16" viewBox="0 0 24 16"><path d="M3.500 .5h18v13a2 2 0 0 1-2 2H2a1.500 1.500 0 0 1-1.500-1.500V3.500h3zM3.500 3.500v10M6 4h7v6H6zM15 4.500h4M15 7.500h4M6 12.500h13" stroke="#e5e5e5" fill="none" /></svg>
    <span className="ml-[8px] w-[30px] text-[13px] text-[#d0d0d0] whitespace-nowrap">98°F</span>
    <svg className="ml-[16px]" width="13" height="8" viewBox="0 0 13 8"><path d="M.7 7.500L6.500 1l5.800 6.500" stroke="#e5e5e5" strokeWidth="1.200" fill="none" /></svg>
    <svg className="ml-[9px]" width="18" height="17" viewBox="0 0 18 17">
      <path d="M.5 3.500l15-3v12H.5z" stroke="#e5e5e5" fill="none" /><path d="M5 8l3-3 2 1M11 7l-3 3-2-1" stroke="#e5e5e5" fill="none" /><circle cx="13" cy="13" r="3.500" fill="#f28f00" />
    </svg>
    <svg className="ml-[7px]" width="16" height="9" viewBox="0 0 16 9"><rect x=".5" y=".5" width="13" height="8" stroke="#e5e5e5" fill="none" /><rect x="2" y="2" width="7" height="5" fill="#e5e5e5" /><rect x="14" y="3" width="2" height="3" fill="#e5e5e5" /></svg>
    <svg className="ml-[10px]" width="13" height="12" viewBox="0 0 13 12"><path d="M.5 8A7 7 0 0 1 9 1M3 10a5 5 0 0 1 6-6M5.500 11a3 3 0 0 1 3.500-4" stroke="#9a9a9a" fill="none" /><circle cx="10.500" cy="10.500" r="1.300" fill="#e5e5e5" /></svg>
    <svg className="ml-[8px]" width="16" height="13" viewBox="0 0 16 13"><path d="M.5 4.500h2.500L6.500 1v11L3 8.500H.5zM9 4.500a3 3 0 0 1 0 4M11 2.500a6 6 0 0 1 0 8M13 .5a9 9 0 0 1 0 12" stroke="#e5e5e5" fill="none" /></svg>
    <span className="ml-[10px] w-[24px] text-[11.500px] whitespace-nowrap text-[#d8d8d8]">ENG</span>
    <div className="ml-[8px] w-[60px] text-center text-[11.500px] leading-[19px] text-[#d8d8d8]">
      <div>8:51 PM</div><div>7/6/2021</div>
    </div>
    <div className="ml-[15px] relative w-[16px] h-[14px] -mt-[6px]">
      <svg className="block" width="16" height="15" viewBox="0 0 16 15"><path d="M0 0h16v11H7l-3 3v-3H0z" fill="#fff" /><path d="M3 3.500h10M3 6.500h10" stroke="#1c1c1c" /></svg>
      <div className="absolute left-[7px] top-[9px] w-[17px] h-[17px] rounded-full bg-[#3a3a3a] border border-[#666] text-[11px] font-bold leading-[15px] text-center text-white">9</div>
    </div>
  </div>
);

export default function App() {
  return (
    <div className="w-[1366px] h-[768px] overflow-hidden flex flex-col bg-white">
      <TitleBar />
      <TabsBar />
      <Ribbon />
      <FormulaBar />
      <Sheet />
      <SheetTabs />
      <StatusBar />
      <Taskbar />
    </div>
  );
}
